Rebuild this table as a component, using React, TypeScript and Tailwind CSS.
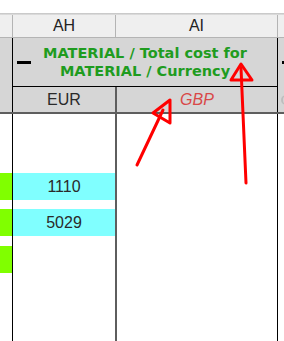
import React from "react";

const sans = { fontFamily: '"Liberation Sans", Arial, sans-serif' };
const bold = { fontFamily: '"DejaVu Sans", Verdana, sans-serif' };

export default function App() {
  return (
    <div className="relative w-[284px] h-[341px] overflow-hidden bg-white" style={sans}>
      <div className="h-[13px] bg-white" />
      <div className="h-[2px] bg-linear-to-b from-[#c2c2c2] to-[#e2e2e2]" />
      {/* column letters */}
      <div className="flex h-[23px] bg-[#efefef] border-b border-[#b4b4b4] text-[16px] leading-[22px] text-[#222]">
        <div className="w-[13px] border-r border-[#b4b4b4]" />
        <div className="w-[103px] border-r border-[#b4b4b4] text-center">AH</div>
        <div className="w-[162px] border-r border-[#b4b4b4] text-center">AI</div>
        <div className="flex-1" />
      </div>
      {/* merged green header */}
      <div className="flex h-[49px] bg-[#d6d6d6]">
        <div className="w-[13px] border-r border-black" />
        <div className="relative w-[265px] border-r border-b border-black flex items-center justify-center">
          <div className="absolute left-[4px] top-[23px] w-[14px] h-[3px] bg-black" />
          <div
            className="text-center font-bold text-[14.5px] leading-[18px] text-[#1f9c1f]"
            style={bold}
          >
            <div>MATERIAL / Total cost for</div>
            <div>MATERIAL / Currency</div>
          </div>
        </div>
        <div className="relative flex-1">
          <div className="absolute left-[4px] top-[23px] w-[8px] h-[3px] bg-black" />
        </div>
      </div>
      {/* currency row */}
      <div className="flex h-[27px] bg-[#d6d6d6] border-b-2 border-[#5e5e5e] text-[16px] leading-[25px]">
        <div className="w-[13px] border-r border-black" />
        <div className="w-[104px] border-r-2 border-[#5e5e5e] text-center text-[#2a2a2a]">EUR</div>
        <div className="w-[161px] border-r border-black text-center italic text-[#d94848]">GBP</div>
        <div className="flex-1 relative">
          <div className="absolute left-[3px] top-[8px] w-[8px] h-[10px] rounded-l-full border-l-2 border-t border-b border-[#bdbdbd]" />
        </div>
      </div>
      {/* body */}
      <div className="flex h-[227px] text-[16px] text-[#2a2a2a]">
        <div className="w-[13px] border-r border-black flex flex-col pt-[59px]">
          <div className="h-[27px] bg-[#80ff00]" />
          <div className="h-[27px] mt-[9px] bg-[#80ff00]" />
          <div className="h-[27px] mt-[10px] bg-[#80ff00]" />
        </div>
        <div className="w-[104px] border-r-2 border-[#5e5e5e] flex flex-col pt-[59px]">
          <div className="h-[27px] bg-[#80ffff] text-center leading-[27px]">1110</div>
          <div className="h-[27px] mt-[9px] bg-[#80ffff] text-center leading-[27px]">5029</div>
        </div>
        <div className="w-[161px] border-r border-black" />
        <div className="flex-1" />
      </div>
      {/* red annotation arrows */}
      <svg
        className="absolute inset-0 pointer-events-none"
        width="284"
        height="341"
        viewBox="0 0 284 341"
      >
        <g stroke="#ff0000" strokeWidth="3" fill="none" strokeLinejoin="round" strokeLinecap="round">
          <line x1="137" y1="165" x2="163" y2="110" />
          <polygon points="153,113 170,100 170,123" />
          <line x1="246" y1="183" x2="241" y2="68" />
          <polygon points="241,64 231,80 252,80" />
        </g>
      </svg>
    </div>
  );
}
